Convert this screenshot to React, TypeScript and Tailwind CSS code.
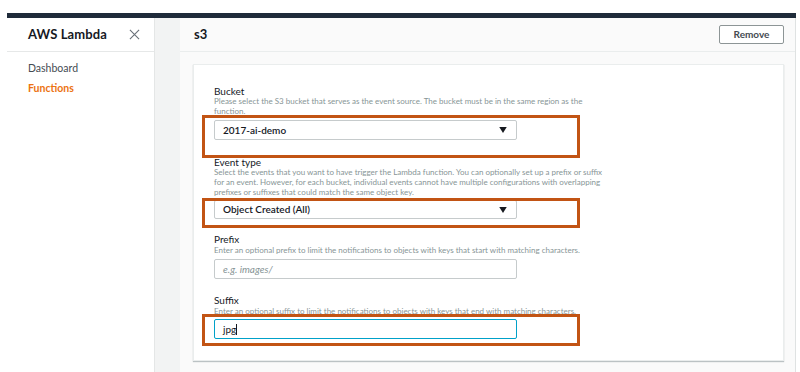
import React from 'react';

const font = { fontFamily: 'Lato, "Open Sans", sans-serif' };

const Caret = () => (
  <svg className="w-[8px] h-[6px]" viewBox="0 0 10 8"><path d="M0 0h10L5 8z" fill="#16191f" /></svg>
);

const Highlight: React.FC<{ className: string }> = ({ className }) => (
  <div className={`absolute border-[3px] border-[#c25414] pointer-events-none ${className}`} />
);

const App: React.FC = () => {
  return (
    <div className="w-[800px] h-[372px] bg-white pt-[13px] pl-[7px] pr-[4px] overflow-hidden text-[#16191f]" style={font}>
      <div className="h-[5px] bg-[#1f2b3a]" />
      <div className="flex h-[354px]">
        {/* Sidebar */}
        <div className="w-[147px] bg-white flex flex-col">
          <div className="h-[34px] border-b border-[#e6e8e8] flex items-center justify-between pl-[21px] pr-[14px]">
            <span className="text-[13px] font-bold tracking-[0.1px]">AWS Lambda</span>
            <svg className="w-[11px] h-[11px]" viewBox="0 0 12 12" fill="none" stroke="#687078" strokeWidth="1.2">
              <path d="M1 1l10 10M11 1L1 11" />
            </svg>
          </div>
          <div className="pl-[21px] pt-[10px] flex flex-col gap-[8px] text-[10.5px] leading-[12px]">
            <span className="text-[#444b52]">Dashboard</span>
            <span className="text-[#ec7211] font-bold">Functions</span>
          </div>
        </div>

        {/* Gray strip */}
        <div className="w-[26px] bg-[#f2f3f3] border-l border-[#e4e6e6]" />

        {/* Main */}
        <div className="flex-1 bg-[#fafafa] border-r border-[#dfe2e2] flex flex-col">
          <div className="h-[34px] border-b border-[#eaeded] flex items-center justify-between pl-[14px] pr-[11px]">
            <span className="text-[13px] font-bold">s3</span>
            <button className="w-[65px] h-[19px] rounded-[2px] border border-[#8d9596] bg-white text-[10px] font-bold text-[#444b52] flex items-center justify-center">
              Remove
            </button>
          </div>

          <div className="pt-[12px] pl-[13px] pr-[11px]">
            <div className="bg-white border border-[#eaeded] shadow-[0_1px_1px_rgba(0,28,36,0.25)] pt-[21px] pb-[21px] px-[20px]">
              {/* Bucket */}
              <div className="text-[10px] leading-[10px]">Bucket</div>
              <div className="text-[8px] leading-[10px] text-[#879596] w-[384px]">
                Please select the S3 bucket that serves as the event source. The bucket must be in the same region as the function.
              </div>
              <div className="relative mt-[4px]">
                <div className="w-[303px] h-[20px] rounded-[2px] border border-[#c6cbcc] bg-white flex items-center justify-between pl-[8px] pr-[9px] text-[10px] font-semibold">
                  <span>2017-ai-demo</span>
                  <Caret />
                </div>
                <Highlight className="left-[-12px] top-[-5px] w-[378px] h-[43px]" />
              </div>

              {/* Event type */}
              <div className="text-[10px] leading-[10px] mt-[17px]">Event type</div>
              <div className="text-[8px] leading-[10px] text-[#879596] w-[392px]">
                Select the events that you want to have trigger the Lambda function. You can optionally set up a prefix or suffix for an event. However, for each bucket, individual events cannot have multiple configurations with overlapping prefixes or suffixes that could match the same object key.
              </div>
              <div className="relative mt-[3px]">
                <div className="w-[303px] h-[19px] rounded-[2px] border border-[#c6cbcc] bg-white flex items-center justify-between pl-[8px] pr-[9px] text-[10px] font-semibold">
                  <span>Object Created (All)</span>
                  <Caret />
                </div>
                <Highlight className="left-[-12px] top-[-2px] w-[378px] h-[30px]" />
              </div>

              {/* Prefix */}
              <div className="text-[10px] leading-[10px] mt-[15px]">Prefix</div>
              <div className="text-[8px] leading-[10px] text-[#879596] mt-[1px]">
                Enter an optional prefix to limit the notifications to objects with keys that start with matching characters.
              </div>
              <div className="mt-[4px] w-[303px] h-[20px] rounded-[2px] border border-[#c6cbcc] bg-white flex items-center pl-[8px] text-[10px] italic text-[#879596]">
                e.g. images/
              </div>

              {/* Suffix */}
              <div className="text-[10px] leading-[10px] mt-[16px]">Suffix</div>
              <div className="text-[8px] leading-[10px] text-[#879596] mt-[1px]">
                Enter an optional suffix to limit the notifications to objects with keys that end with matching characters.
              </div>
              <div className="relative mt-[3px]">
                <div className="w-[303px] h-[20px] rounded-[2px] border border-[#00a1c9] bg-white flex items-center pl-[8px] text-[10px]">
                  <span>jpg</span>
                  <span className="w-px h-[11px] bg-[#16191f]" />
                </div>
                <Highlight className="left-[-12px] top-[-5px] w-[378px] h-[32px]" />
              </div>
            </div>
          </div>
        </div>
      </div>
    </div>
  );
};

export default App;
